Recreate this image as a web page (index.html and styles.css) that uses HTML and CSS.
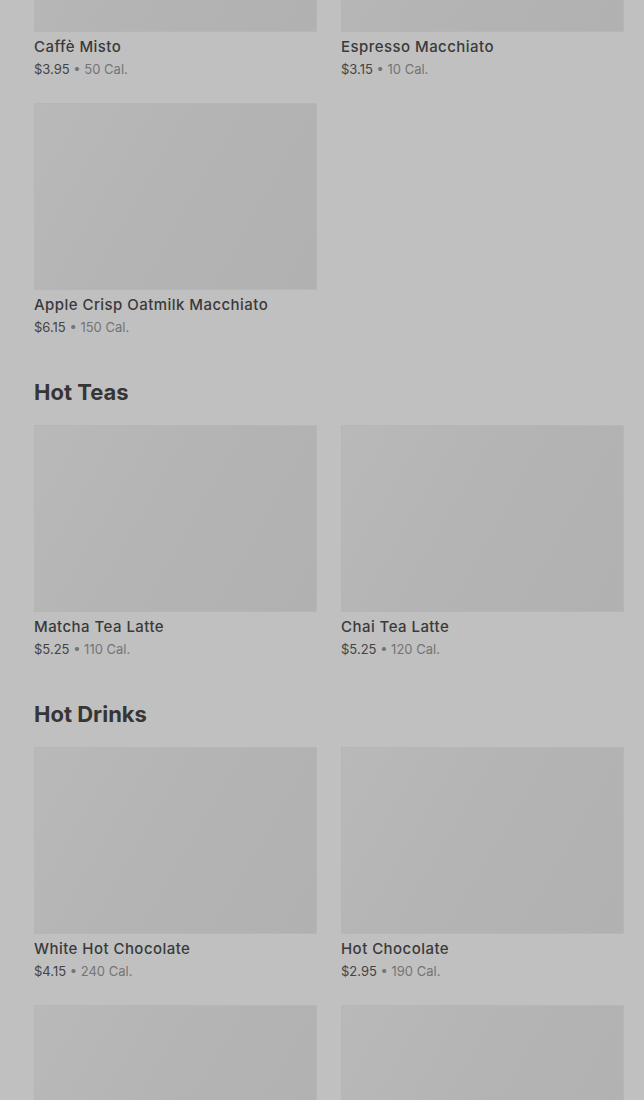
FILE: index.html
```html
<!DOCTYPE html>
<html lang="en">
<head>
    <meta charset="UTF-8">
    <meta name="viewport" content="width=device-width, initial-scale=1.0">
    <title>Menu</title>
    <link rel="stylesheet" href="styles.css">
</head>
<body>
    <div class="menu">
        <!-- Hot Coffees (scrolled past the heading) -->
        <div class="section section-first">
            <div class="item-grid">
                <div class="item">
                    <div class="item-image"></div>
                    <div class="item-name">Caffè Misto</div>
                    <div class="item-meta"><span class="price">$3.95</span> • 50 Cal.</div>
                </div>
                <div class="item">
                    <div class="item-image"></div>
                    <div class="item-name">Espresso Macchiato</div>
                    <div class="item-meta"><span class="price">$3.15</span> • 10 Cal.</div>
                </div>
                <div class="item">
                    <div class="item-image"></div>
                    <div class="item-name">Apple Crisp Oatmilk Macchiato</div>
                    <div class="item-meta"><span class="price">$6.15</span> • 150 Cal.</div>
                </div>
            </div>
        </div>

        <div class="section">
            <h2 class="section-title">Hot Teas</h2>
            <div class="item-grid">
                <div class="item">
                    <div class="item-image"></div>
                    <div class="item-name">Matcha Tea Latte</div>
                    <div class="item-meta"><span class="price">$5.25</span> • 110 Cal.</div>
                </div>
                <div class="item">
                    <div class="item-image"></div>
                    <div class="item-name">Chai Tea Latte</div>
                    <div class="item-meta"><span class="price">$5.25</span> • 120 Cal.</div>
                </div>
            </div>
        </div>

        <div class="section">
            <h2 class="section-title">Hot Drinks</h2>
            <div class="item-grid">
                <div class="item">
                    <div class="item-image"></div>
                    <div class="item-name">White Hot Chocolate</div>
                    <div class="item-meta"><span class="price">$4.15</span> • 240 Cal.</div>
                </div>
                <div class="item">
                    <div class="item-image"></div>
                    <div class="item-name">Hot Chocolate</div>
                    <div class="item-meta"><span class="price">$2.95</span> • 190 Cal.</div>
                </div>
                <div class="item">
                    <div class="item-image"></div>
                </div>
                <div class="item">
                    <div class="item-image"></div>
                </div>
            </div>
        </div>
    </div>
</body>
</html>
```

FILE: styles.css
```css
body {
    font-family: Inter, "Noto Sans", sans-serif;
    background: #c0c0c0;
    color: #383838;
    margin: 0;
    overflow: hidden;
}

.menu {
    padding: 0 20px 0 34px;
}

.section {
    margin-top: 41px;
}

.section-first {
    margin-top: -155px;
}

.section-title {
    font-size: 22px;
    line-height: 28px;
    font-weight: 700;
    color: #363636;
    margin: 0 0 19px;
}

.item-grid {
    display: grid;
    grid-template-columns: 283px 283px;
    column-gap: 24px;
    row-gap: 24px;
}

.item-image {
    height: 187px;
    background: linear-gradient(120deg, #b9b9b9 0%, #b4b4b4 45%, #b1b1b1 100%);
    box-shadow: inset 0 0 0 1px #b6b6b6;
}

.item-name {
    font-size: 15px;
    line-height: 22px;
    font-weight: 500;
    letter-spacing: 0.45px;
    margin-top: 4px;
    color: #3a3a3a;
}

.item-meta {
    font-size: 13px;
    line-height: 20px;
    margin-top: 1px;
    color: #747474;
}

.price {
    color: #444;
}
```
